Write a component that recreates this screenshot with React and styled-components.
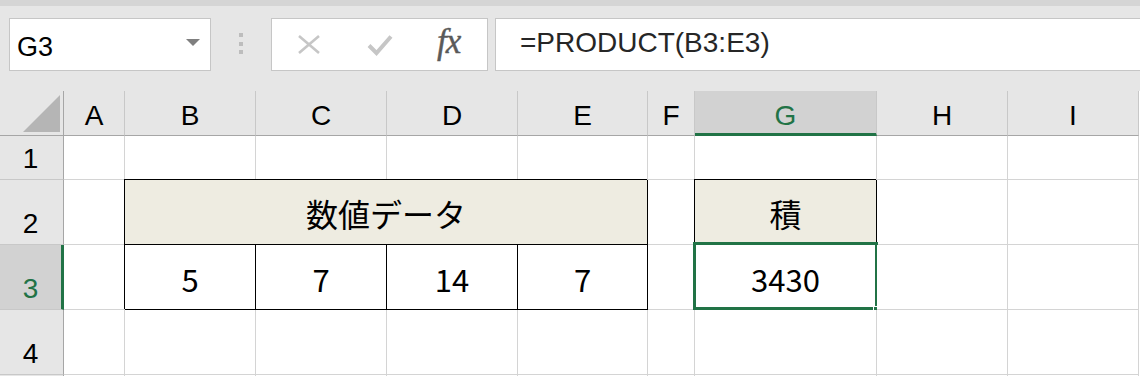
import React from 'react';
import styled, { createGlobalStyle } from 'styled-components';

const GREEN = '#217346';
const GRID = '#d4d4d4';

const GlobalStyle = createGlobalStyle`
  html, body {
    margin: 0;
    padding: 0;
  }
  body {
    background: #e6e6e6;
    font-family: "Liberation Sans", Arial, sans-serif;
    overflow: hidden;
  }
`;

const Window = styled.div`
  width: 1140px;
  height: 376px;
  overflow: hidden;
  background: #e6e6e6;
`;

const FormulaBar = styled.div`
  display: flex;
  align-items: flex-start;
  box-sizing: border-box;
  height: 91px;
  border-top: 6px solid #d5d5d5;
  padding: 12px 0 0 9px;
`;

const NameBox = styled.div`
  box-sizing: border-box;
  width: 202px;
  height: 53px;
  background: #fff;
  border: 1px solid #c6c6c6;
  display: flex;
  align-items: center;
  justify-content: space-between;
  padding: 5px 10px 0 7px;
  font-size: 27px;
  color: #000;
`;

const DropArrow = styled.span`
  width: 0;
  height: 0;
  border-left: 7px solid transparent;
  border-right: 7px solid transparent;
  border-top: 7px solid #7f7f7f;
  margin-bottom: 9px;
`;

const Grip = styled.div`
  display: flex;
  flex-direction: column;
  gap: 4.5px;
  margin: 15px 28px 0 28px;
`;

const GripDot = styled.span`
  width: 4px;
  height: 4px;
  background: #bdbdbd;
`;

const ButtonGroup = styled.div`
  box-sizing: border-box;
  width: 217px;
  height: 53px;
  background: #fff;
  border: 1px solid #c6c6c6;
  display: flex;
  align-items: center;
  padding-left: 26px;
`;

const IconButton = styled.span`
  display: flex;
  align-items: center;
  margin-right: ${p => p.$gap || 0}px;
`;

const Fx = styled.span`
  font-family: "Liberation Serif", "Times New Roman", serif;
  font-style: italic;
  font-size: 35px;
  letter-spacing: -1px;
  color: #5a5a5a;
  margin-top: -5px;
  -webkit-text-stroke: 0.4px #5a5a5a;
`;

const FormulaInput = styled.div`
  box-sizing: border-box;
  flex: 1;
  height: 53px;
  margin-left: 7px;
  margin-right: -2px;
  background: #fff;
  border: 1px solid #c6c6c6;
  display: flex;
  align-items: center;
  padding: 0 0 3px 24px;
  font-size: 28px;
  color: #262626;
`;

const Sheet = styled.div`
  display: grid;
  grid-template-columns: 64px 61px 131px 131px 131px 130px 47px 182px 131px 131px;
  grid-template-rows: 45px 44px 65px 65px 65px 20px;
  background: #fff;
`;

const Corner = styled.div`
  box-sizing: border-box;
  background: #e6e6e6;
  border-right: 1px solid #a6a6a6;
  border-bottom: 1px solid #a6a6a6;
  display: flex;
  align-items: flex-end;
  justify-content: flex-end;
  padding: 0 3px 3px 0;
`;

const CornerTriangle = styled.span`
  width: 0;
  height: 0;
  border-left: 37px solid transparent;
  border-bottom: 37px solid #b5b5b5;
`;

const ColHead = styled.div`
  box-sizing: border-box;
  background: ${p => (p.$active ? '#d2d2d2' : '#e6e6e6')};
  color: ${p => (p.$active ? GREEN : '#000')};
  border-right: 1px solid #c8c8c8;
  border-bottom: ${p => (p.$active ? `3px solid ${GREEN}` : '1px solid #a6a6a6')};
  display: flex;
  align-items: flex-end;
  justify-content: center;
  padding-bottom: ${p => (p.$active ? 3 : 5)}px;
  font-size: 28px;
  line-height: 1;
`;

const RowHead = styled.div`
  box-sizing: border-box;
  background: ${p => (p.$active ? '#d2d2d2' : '#e6e6e6')};
  color: ${p => (p.$active ? GREEN : '#000')};
  border-right: ${p => (p.$active ? `3px solid ${GREEN}` : '1px solid #a6a6a6')};
  border-bottom: 1px solid #c8c8c8;
  display: flex;
  align-items: flex-end;
  justify-content: center;
  padding: 0 ${p => (p.$active ? 0 : 2)}px 6px 0;
  font-size: 28px;
  line-height: 1;
`;

const Cell = styled.div`
  position: relative;
  box-sizing: border-box;
  grid-column: span ${p => p.$span || 1};
  background: ${p => p.$fill || '#fff'};
  border-right: 1px solid ${p => (p.$boxed ? '#000' : GRID)};
  border-bottom: 1px solid ${p => (p.$boxed ? '#000' : GRID)};
  box-shadow: ${p => (p.$boxed ? '-1px -1px 0 0 #000' : 'none')};
  display: flex;
  align-items: flex-end;
  justify-content: center;
  padding-bottom: 15px;
  font-family: "Noto Sans CJK JP", "Noto Sans", sans-serif;
  font-size: ${p => (p.$jp ? 32 : 31)}px;
  line-height: 1;
  color: #000;
`;

const Selection = styled.div`
  position: absolute;
  top: -3px;
  left: -2px;
  right: -2px;
  bottom: -1px;
  border: 3px solid ${GREEN};
  pointer-events: none;
`;

const FillHandle = styled.span`
  position: absolute;
  right: -5px;
  bottom: -5px;
  width: 7px;
  height: 7px;
  background: ${GREEN};
  border-left: 1px solid #fff;
  border-top: 1px solid #fff;
`;

const COLUMNS = ['A', 'B', 'C', 'D', 'E', 'F', 'G', 'H', 'I'];
const HEAD_FILL = '#eeece1';

const CancelIcon = () => (
  <svg width="22" height="19" viewBox="0 0 22 19">
    <path d="M1 1 L21 18 M21 1 L1 18" stroke="#c6c6c6" strokeWidth="2.6" fill="none" />
  </svg>
);

const EnterIcon = () => (
  <svg width="26" height="22" viewBox="0 0 26 22">
    <path d="M2 11.5 L9.5 19 L24 2.5" stroke="#c6c6c6" strokeWidth="4" fill="none" />
  </svg>
);

const App = () => {
  return (
    <Window>
      <GlobalStyle />
      <FormulaBar>
        <NameBox>
          <span>G3</span>
          <DropArrow />
        </NameBox>
        <Grip>
          <GripDot />
          <GripDot />
          <GripDot />
        </Grip>
        <ButtonGroup>
          <IconButton $gap={47}>
            <CancelIcon />
          </IconButton>
          <IconButton $gap={44}>
            <EnterIcon />
          </IconButton>
          <Fx>fx</Fx>
        </ButtonGroup>
        <FormulaInput>=PRODUCT(B3:E3)</FormulaInput>
      </FormulaBar>

      <Sheet>
        <Corner>
          <CornerTriangle />
        </Corner>
        {COLUMNS.map(c => (
          <ColHead key={c} $active={c === 'G'}>
            {c}
          </ColHead>
        ))}

        <RowHead>1</RowHead>
        {COLUMNS.map(c => (
          <Cell key={`1${c}`} />
        ))}

        <RowHead>2</RowHead>
        <Cell />
        <Cell $span={4} $boxed $fill={HEAD_FILL} $jp>
          数値データ
        </Cell>
        <Cell />
        <Cell $boxed $fill={HEAD_FILL} $jp>
          積
        </Cell>
        <Cell />
        <Cell />

        <RowHead $active>3</RowHead>
        <Cell />
        <Cell $boxed>5</Cell>
        <Cell $boxed>7</Cell>
        <Cell $boxed>14</Cell>
        <Cell $boxed>7</Cell>
        <Cell />
        <Cell $boxed>
          3430
          <Selection />
          <FillHandle />
        </Cell>
        <Cell />
        <Cell />

        <RowHead>4</RowHead>
        {COLUMNS.map(c => (
          <Cell key={`4${c}`} />
        ))}

        <RowHead />
        {COLUMNS.map(c => (
          <Cell key={`5${c}`} />
        ))}
      </Sheet>
    </Window>
  );
};

export default App;
